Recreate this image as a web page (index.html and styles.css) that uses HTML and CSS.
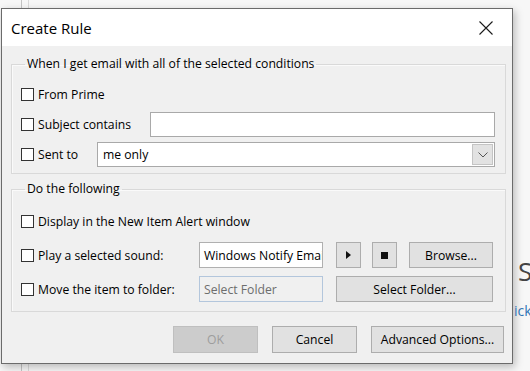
FILE: index.html
```html
<!DOCTYPE html>
<html lang="en">
<head>
    <meta charset="UTF-8">
    <meta name="viewport" content="width=device-width, initial-scale=1.0">
    <title>Create Rule</title>
    <link rel="stylesheet" href="styles.css">
</head>
<body>
    <div class="screen">
        <div class="dialog">
            <div class="titlebar">
                <span class="title">Create Rule</span>
                <svg class="close" width="14" height="14" viewBox="0 0 14 14">
                    <path d="M0.5 0.5 L13.5 13.5 M13.5 0.5 L0.5 13.5" stroke="#1a1a1a" stroke-width="1.1" fill="none"/>
                </svg>
            </div>

            <div class="content">
                <fieldset class="group conditions">
                    <legend>When I get email with all of the selected conditions</legend>
                    <div class="row">
                        <label class="check"><span class="box"></span>From Prime</label>
                    </div>
                    <div class="row">
                        <label class="check subject"><span class="box"></span>Subject contains</label>
                        <div class="field subject-field"></div>
                    </div>
                    <div class="row">
                        <label class="check sent"><span class="box"></span>Sent to</label>
                        <div class="field combo">
                            <span>me only</span>
                            <span class="drop">
                                <svg width="10" height="6" viewBox="0 0 10 6">
                                    <path d="M0.5 0.5 L5 5 L9.5 0.5" stroke="#555" stroke-width="1" fill="none"/>
                                </svg>
                            </span>
                        </div>
                    </div>
                </fieldset>

                <fieldset class="group actions-group">
                    <legend>Do the following</legend>
                    <div class="row tall">
                        <label class="check"><span class="box"></span>Display in the New Item Alert window</label>
                    </div>
                    <div class="row tall">
                        <label class="check wide"><span class="box"></span>Play a selected sound:</label>
                        <div class="field sound">Windows Notify Email</div>
                        <button class="btn icon play">
                            <svg width="5" height="8" viewBox="0 0 5 8"><path d="M0 0 L5 4 L0 8 Z" fill="#111"/></svg>
                        </button>
                        <button class="btn icon stop">
                            <svg width="7" height="7" viewBox="0 0 7 7"><rect width="7" height="7" fill="#111"/></svg>
                        </button>
                        <button class="btn browse">Browse...</button>
                    </div>
                    <div class="row tall">
                        <label class="check wide"><span class="box"></span>Move the item to folder:</label>
                        <div class="field folder">Select Folder</div>
                        <button class="btn pick">Select Folder...</button>
                    </div>
                </fieldset>

                <div class="buttons">
                    <button class="btn footer" disabled>OK</button>
                    <button class="btn footer">Cancel</button>
                    <button class="btn footer advanced">Advanced Options...</button>
                </div>
            </div>
        </div>

        <div class="side">
            <span class="big">S</span>
            <span class="link">ick</span>
        </div>
    </div>
</body>
</html>
```

FILE: styles.css
```css
body {
    margin: 0;
    font-family: "Open Sans", "Noto Sans", sans-serif;
    font-size: 12.2px;
    color: #000;
    background-color: #f7f7f7;
    background-image:
        linear-gradient(to right, transparent 21px, #c4c4c4 21px, #c4c4c4 22px, transparent 22px,
                        transparent 28px, #dadada 28px, #dadada 29px, transparent 29px);
    overflow: hidden;
}
.screen {
    display: flex;
    width: 530px;
    height: 371px;
}
.dialog {
    box-sizing: border-box;
    flex: none;
    width: 512px;
    height: 356px;
    margin: 8px 0 0 1px;
    border: 1px solid #6b6b6b;
    background-color: #f0f0f0;
    box-shadow: 2px 3px 8px rgba(0, 0, 0, 0.25);
    display: flex;
    flex-direction: column;
}
.titlebar {
    height: 37px;
    background-color: #fff;
    display: flex;
    align-items: center;
    justify-content: space-between;
    padding: 0 19px 0 9px;
}
.title {
    font-size: 15px;
}
.close {
    margin-top: 1px;
}
.content {
    padding: 0 6px 0 9px;
}
.group {
    margin: 10px 0 0;
    padding: 10px 10px 6px 9px;
    border: 1px solid #d9d9d9;
    box-shadow: inset 1px 1px #fafafa;
}
.group legend {
    padding: 0 2px;
    margin-left: 4px;
    line-height: 16px;
}
.actions-group {
    margin-top: 7px;
    padding-top: 3px;
    padding-bottom: 9px;
}
.row {
    display: flex;
    align-items: center;
    height: 25px;
    margin-top: 5px;
}
.row:first-of-type {
    margin-top: 0;
}
.row.tall {
    height: 26px;
    margin-top: 8px;
}
.check {
    display: flex;
    align-items: center;
    gap: 4px;
}
.box {
    box-sizing: border-box;
    width: 13px;
    height: 13px;
    background-color: #fff;
    border: 1px solid #333;
}
.subject {
    width: 129px;
}
.sent {
    width: 76px;
}
.wide {
    width: 178px;
}
.field {
    box-sizing: border-box;
    height: 100%;
    background-color: #fff;
    border: 1px solid #a9a9a9;
    display: flex;
    align-items: center;
    padding: 0 4px;
    white-space: nowrap;
    overflow: hidden;
}
.subject-field {
    flex: 1;
}
.combo {
    flex: 1;
    justify-content: space-between;
    padding: 0 1px 0 5px;
}
.drop {
    box-sizing: border-box;
    width: 21px;
    height: 21px;
    background-color: #e2e2e2;
    border: 1px solid #c4c4c4;
    display: flex;
    align-items: center;
    justify-content: center;
}
.sound {
    width: 124px;
    border-color: #b0b0b0;
}
.folder {
    width: 124px;
    color: #6d6d6d;
    background-color: #f0f0f0;
    border-color: #b3c6dc;
}
.btn {
    box-sizing: border-box;
    height: 100%;
    font-family: inherit;
    font-size: 12.2px;
    color: #000;
    background-color: #e1e1e1;
    border: 1px solid #adadad;
    padding: 0;
    margin-left: 12px;
    display: flex;
    align-items: center;
    justify-content: center;
}
.icon {
    width: 25px;
    margin-left: 13px;
}
.stop {
    margin-left: 11px;
}
.browse {
    width: 84px;
}
.pick {
    width: 157px;
    margin-left: 13px;
}
.buttons {
    display: flex;
    justify-content: flex-end;
    gap: 14px;
    margin-top: 14px;
    padding-right: 2px;
}
.footer {
    width: 85px;
    height: 27px;
    margin-left: 0;
}
.footer:disabled {
    background-color: #cccccc;
    border-color: #bfbfbf;
    color: #9d9d9d;
}
.advanced {
    width: 133px;
}
.side {
    flex: 1;
    display: flex;
    flex-direction: column;
    padding: 256px 0 0 5px;
    color: #444;
}
.big {
    font-size: 26px;
    line-height: 30px;
}
.link {
    margin: 15px 0 0 -4px;
    color: #2f74b5;
    font-size: 14px;
}
```
